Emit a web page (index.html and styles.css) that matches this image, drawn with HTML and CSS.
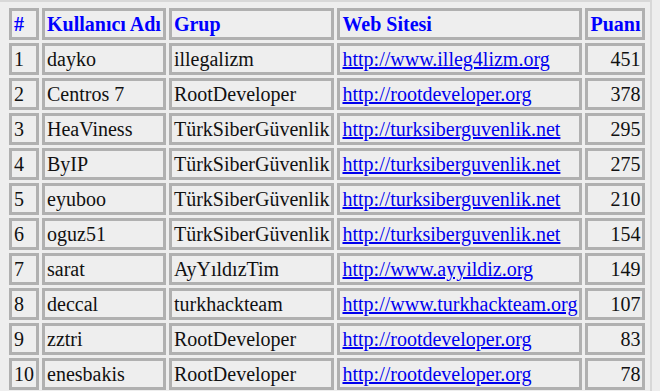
FILE: index.html
```html
<!DOCTYPE html>
<html lang="tr">
<head>
<meta charset="utf-8">
<title>Puan Tablosu</title>
<link rel="stylesheet" href="styles.css">
</head>
<body>
<table class="scores">
  <thead>
    <tr><th>#</th><th>Kullanıcı Adı</th><th>Grup</th><th>Web Sitesi</th><th>Puanı</th></tr>
  </thead>
  <tbody>
    <tr><td>1</td><td>dayko</td><td>illegalizm</td><td><a href="#">http://www.illeg4lizm.org</a></td><td class="num">451</td></tr>
    <tr><td>2</td><td>Centros 7</td><td>RootDeveloper</td><td><a href="#">http://rootdeveloper.org</a></td><td class="num">378</td></tr>
    <tr><td>3</td><td>HeaViness</td><td>TürkSiberGüvenlik</td><td><a href="#">http://turksiberguvenlik.net</a></td><td class="num">295</td></tr>
    <tr><td>4</td><td>ByIP</td><td>TürkSiberGüvenlik</td><td><a href="#">http://turksiberguvenlik.net</a></td><td class="num">275</td></tr>
    <tr><td>5</td><td>eyuboo</td><td>TürkSiberGüvenlik</td><td><a href="#">http://turksiberguvenlik.net</a></td><td class="num">210</td></tr>
    <tr><td>6</td><td>oguz51</td><td>TürkSiberGüvenlik</td><td><a href="#">http://turksiberguvenlik.net</a></td><td class="num">154</td></tr>
    <tr><td>7</td><td>sarat</td><td>AyYıldızTim</td><td><a href="#">http://www.ayyildiz.org</a></td><td class="num">149</td></tr>
    <tr><td>8</td><td>deccal</td><td>turkhackteam</td><td><a href="#">http://www.turkhackteam.org</a></td><td class="num">107</td></tr>
    <tr><td>9</td><td>zztri</td><td>RootDeveloper</td><td><a href="#">http://rootdeveloper.org</a></td><td class="num">83</td></tr>
    <tr><td>10</td><td>enesbakis</td><td>RootDeveloper</td><td><a href="#">http://rootdeveloper.org</a></td><td class="num">78</td></tr>
  </tbody>
</table>
</body>
</html>
```
FILE: styles.css
```css
html, body {
  margin: 0;
  padding: 0;
  background: #eeeeee;
}

body {
  font-family: "Liberation Serif", "Times New Roman", serif;
  font-size: 20px;
  color: #111;
}

.scores {
  border-collapse: separate;
  border-spacing: 3px;
  border-top: 2px solid #d8d8d8;
  border-right: 2px solid #d8d8d8;
  padding: 3px 2px 0 6px;
}

.scores th,
.scores td {
  border: 3px solid #b0b0b0;
  padding: 2px 2px;
  line-height: 22px;
  height: 22px;
  white-space: nowrap;
  text-align: left;
  background: #eeeeee;
}

.scores th {
  color: #0000ff;
  font-weight: bold;
}

.scores td.num {
  text-align: right;
}

.scores a {
  color: #0000ee;
  text-decoration: underline;
}
```
